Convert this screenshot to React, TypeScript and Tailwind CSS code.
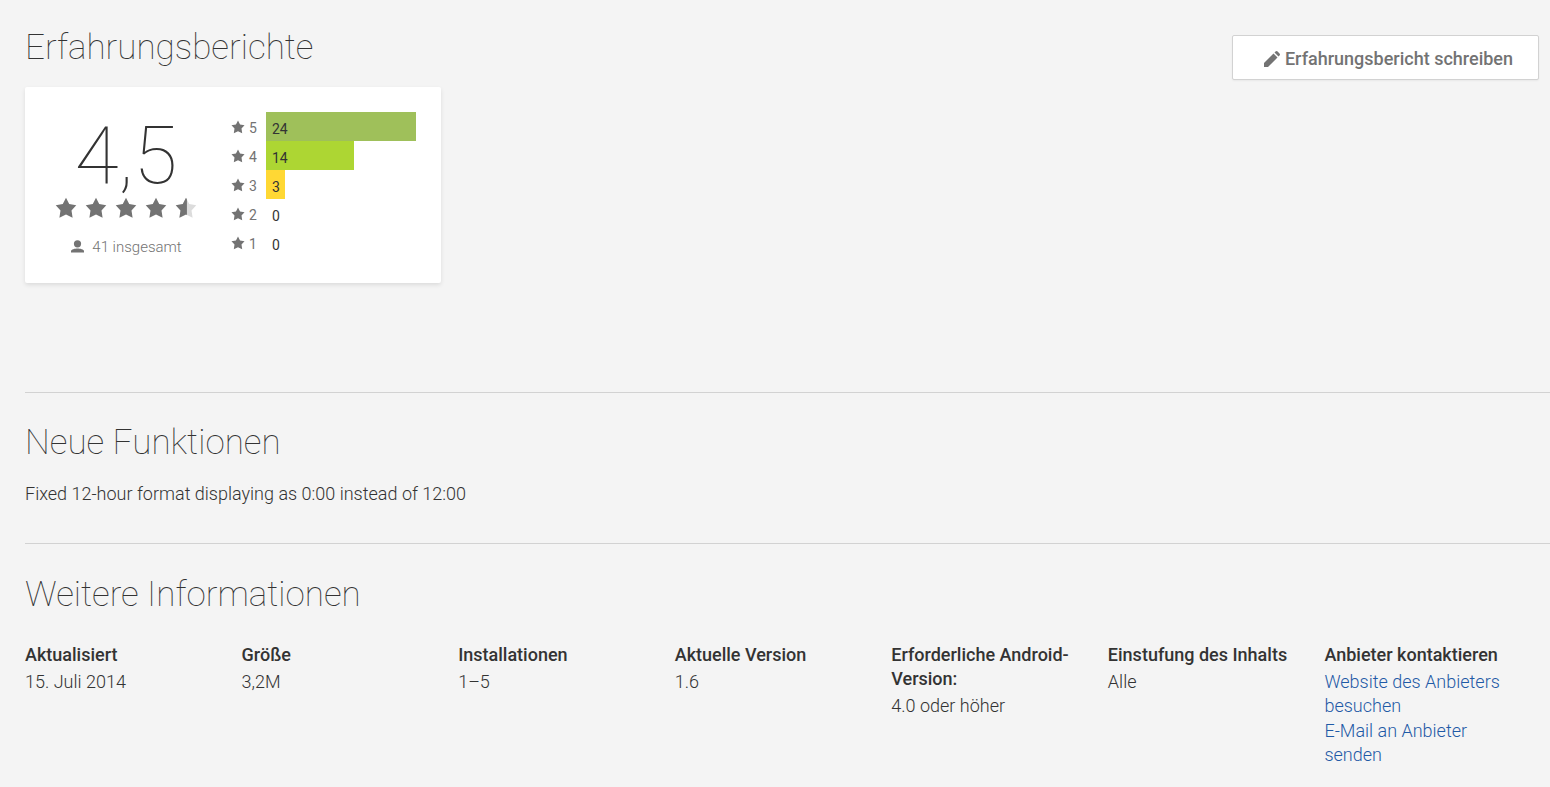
import React from 'react';

const ratings = [
  { stars: 5, count: 24, color: 'bg-[#9fc05a]' },
  { stars: 4, count: 14, color: 'bg-[#add633]' },
  { stars: 3, count: 3, color: 'bg-[#ffd834]' },
  { stars: 2, count: 0, color: 'bg-transparent' },
  { stars: 1, count: 0, color: 'bg-transparent' },
];

const details = [
  { title: 'Aktualisiert', value: '15. Juli 2014' },
  { title: 'Größe', value: '3,2M' },
  { title: 'Installationen', value: '1–5' },
  { title: 'Aktuelle Version', value: '1.6' },
  { title: 'Erforderliche Android-Version:', value: '4.0 oder höher' },
  { title: 'Einstufung des Inhalts', value: 'Alle' },
];

const Star: React.FC<{ className: string; half?: boolean }> = ({ className, half }) => (
  <svg viewBox="0 0 24 24" className={className} aria-hidden="true">
    <path
      d="M12 .8l3.500 6.800 7.700 1.300-5.200 5.800 1.200 8L12 19.200l-7.200 3.500 1.200-8L.8 8.900l7.700-1.300z"
      fill={half ? '#dcdcdc' : '#737373'}
    />
    {half && <path d="M13 2.700v17L12 19.200l-7.200 3.500 1.200-8L.8 8.900l7.700-1.300L12 .8z" fill="#737373" />}
  </svg>
);

const Heading: React.FC<{ children: React.ReactNode }> = ({ children }) => (
  <h2 className="text-[35px] leading-[50px] font-thin text-[#333]">{children}</h2>
);

const App: React.FC = () => {
  const most = Math.max(...ratings.map(r => r.count));

  return (
    <main className="min-h-screen bg-[#f4f4f4] pl-[25px] font-[Roboto,sans-serif] text-[18px] leading-6 font-light text-[#333]">
      <section className="pt-[23px] pb-[109px]">
        <div className="flex items-start justify-between pr-[11px]">
          <Heading>Erfahrungsberichte</Heading>
          <button className="mt-3 flex items-center gap-1 rounded-xs border border-[#d2d2d2] bg-white pt-[11px] pr-[25px] pb-2 pl-[30px] font-medium text-[#737373] shadow-xs">
            <svg viewBox="0 0 18 18" className="size-[18px]" fill="currentColor" aria-hidden="true">
              <path d="M1 17v-4L10.500 3.500l4 4L5 17zM11.500 2.500l1-1q1-1 2.100 0l1.900 1.900q1 1 0 2.100l-1 1z" />
            </svg>
            Erfahrungsbericht schreiben
          </button>
        </div>

        <div className="mt-[7px] flex h-[196px] w-[416px] rounded-xs bg-white shadow-[0_2px_4px_rgba(0,0,0,0.1)]">
          <div className="flex w-[202px] flex-col items-center pt-7">
            <div className="text-[80px] leading-[82px] font-thin">4,5</div>
            <div className="flex gap-2">
              {[1, 2, 3, 4, 5].map(n => (
                <Star key={n} className="size-[22px]" half={n === 5} />
              ))}
            </div>
            <div className="mt-4 flex items-center gap-2 text-[15px] text-[#737373]">
              <svg viewBox="0 0 14 14" className="size-[14px]" fill="#737373" aria-hidden="true">
                <circle cx="7.500" cy="3.800" r="3.600" />
                <path d="M1 12.500v-1.400C1 9.200 5 8.400 7.500 8.400s6.500.8 6.500 2.700v1.400z" />
              </svg>
              41 insgesamt
            </div>
          </div>

          <div className="flex-1 pt-[25px] text-[14px] leading-[29px] font-normal">
            {ratings.map(({ stars, count, color }) => (
              <div key={stars} className="flex h-[29px]">
                <div className="flex w-[39px] items-center gap-1 pl-1 text-[#737373]">
                  <Star className="size-[14px]" />
                  <span className="pt-1">{stars}</span>
                </div>
                <div className="w-[150px]">
                  <div className={`h-full min-w-3 pt-[3px] pl-[6px] text-[#333] ${color}`} style={{ width: `${(count / most) * 100}%` }}>
                    {count}
                  </div>
                </div>
              </div>
            ))}
          </div>
        </div>
      </section>

      <section className="border-t border-[#d2d2d2] pt-[25px] pb-[37px]">
        <Heading>Neue Funktionen</Heading>
        <p className="mt-[14px]">Fixed 12-hour format displaying as 0:00 instead of 12:00</p>
      </section>

      <section className="border-t border-[#d2d2d2] pt-[26px]">
        <Heading>Weitere Informationen</Heading>
        <div className="mt-[23px] grid grid-cols-7 pr-[9px]">
          {details.map(({ title, value }) => (
            <div key={title} className="pr-9">
              <h3 className="font-medium">{title}</h3>
              <p className="mt-[3px]">{value}</p>
            </div>
          ))}
          <div className="pr-9">
            <h3 className="font-medium">Anbieter kontaktieren</h3>
            <div className="mt-[3px] flex flex-col gap-px text-[#1f5aa6]">
              <a href="#website">Website des Anbieters besuchen</a>
              <a href="#email">E-Mail an Anbieter senden</a>
            </div>
          </div>
        </div>
      </section>
    </main>
  );
};

export default App;
